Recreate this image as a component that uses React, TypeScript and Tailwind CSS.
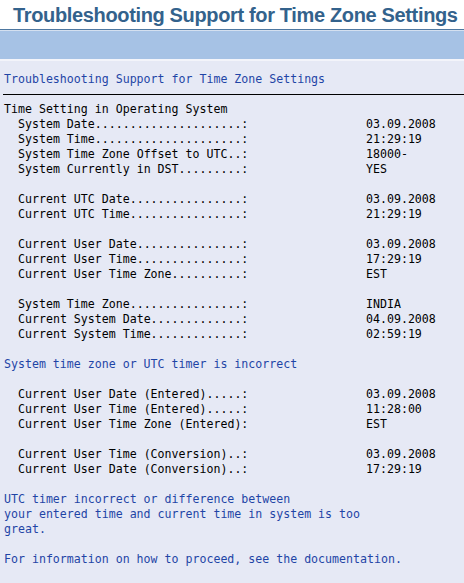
type Row = { label?: string; value?: string; text?: string; tone?: 'blue' | 'black'; indent?: boolean };

const rows: Row[] = [
  { text: 'Time Setting in Operating System' },
  { label: 'System Date.....................:', value: '03.09.2008' },
  { label: 'System Time.....................:', value: '21:29:19' },
  { label: 'System Time Zone Offset to UTC..:', value: '18000-' },
  { label: 'System Currently in DST.........:', value: 'YES' },
  {},
  { label: 'Current UTC Date................:', value: '03.09.2008' },
  { label: 'Current UTC Time................:', value: '21:29:19' },
  {},
  { label: 'Current User Date...............:', value: '03.09.2008' },
  { label: 'Current User Time...............:', value: '17:29:19' },
  { label: 'Current User Time Zone..........:', value: 'EST' },
  {},
  { label: 'System Time Zone................:', value: 'INDIA' },
  { label: 'Current System Date.............:', value: '04.09.2008' },
  { label: 'Current System Time.............:', value: '02:59:19' },
  {},
  { text: 'System time zone or UTC timer is incorrect', tone: 'blue' },
  {},
  { label: 'Current User Date (Entered).....:', value: '03.09.2008' },
  { label: 'Current User Time (Entered).....:', value: '11:28:00' },
  { label: 'Current User Time Zone (Entered):', value: 'EST' },
  {},
  { label: 'Current User Time (Conversion)..:', value: '03.09.2008' },
  { label: 'Current User Date (Conversion)..:', value: '17:29:19' },
  {},
  { text: 'UTC timer incorrect or difference between', tone: 'blue' },
  { text: 'your entered time and current time in system is too', tone: 'blue' },
  { text: 'great.', tone: 'blue' },
  {},
  { text: 'For information on how to proceed, see the documentation.', tone: 'blue' },
];

const ListLine = ({ row }: { row: Row }) => {
  if (row.label) {
    return (
      <div className="flex h-[15px] text-black whitespace-pre">
        <span className="w-[362px] shrink-0 pl-[14px]">{row.label}</span>
        <span>{row.value}</span>
      </div>
    );
  }
  if (row.text) {
    return (
      <div className={`h-[15px] whitespace-pre ${row.tone === 'blue' ? 'text-[#1f45a6]' : 'text-black'}`}>
        {row.text}
      </div>
    );
  }
  return <div className="h-[15px]" />;
};

export default function App() {
  return (
    <div className="min-h-screen w-[464px] bg-[#e6e9f5] overflow-hidden">
      {/* Title bar */}
      <div className="h-[29px] bg-white flex items-center pl-[13px]">
        <h1 className="font-['Liberation_Sans',Arial,sans-serif] font-bold text-[20px] tracking-[-0.35px] text-[#33628c] whitespace-nowrap leading-none">
          Troubleshooting Support for Time Zone Settings
        </h1>
      </div>
      <div className="h-px bg-[#4d77a0]" />
      <div className="h-px bg-[#d4e0f0]" />
      {/* Toolbar */}
      <div className="h-[28px] bg-[#a6c2e5]" />
      <div className="h-[2px] bg-[#f3f4fa]" />

      {/* List output */}
      <div className="pt-[11px] pl-[4px] font-['DejaVu_Sans_Mono','Liberation_Mono',monospace] text-[11.6px] leading-[15px]">
        <div className="h-[15px] text-[#1f45a6] whitespace-pre">Troubleshooting Support for Time Zone Settings</div>
        <div className="h-[15px] flex items-center -ml-px">
          <div className="h-px w-full bg-black" />
        </div>
        {rows.map((r, i) => (
          <ListLine key={i} row={r} />
        ))}
      </div>
    </div>
  );
}
